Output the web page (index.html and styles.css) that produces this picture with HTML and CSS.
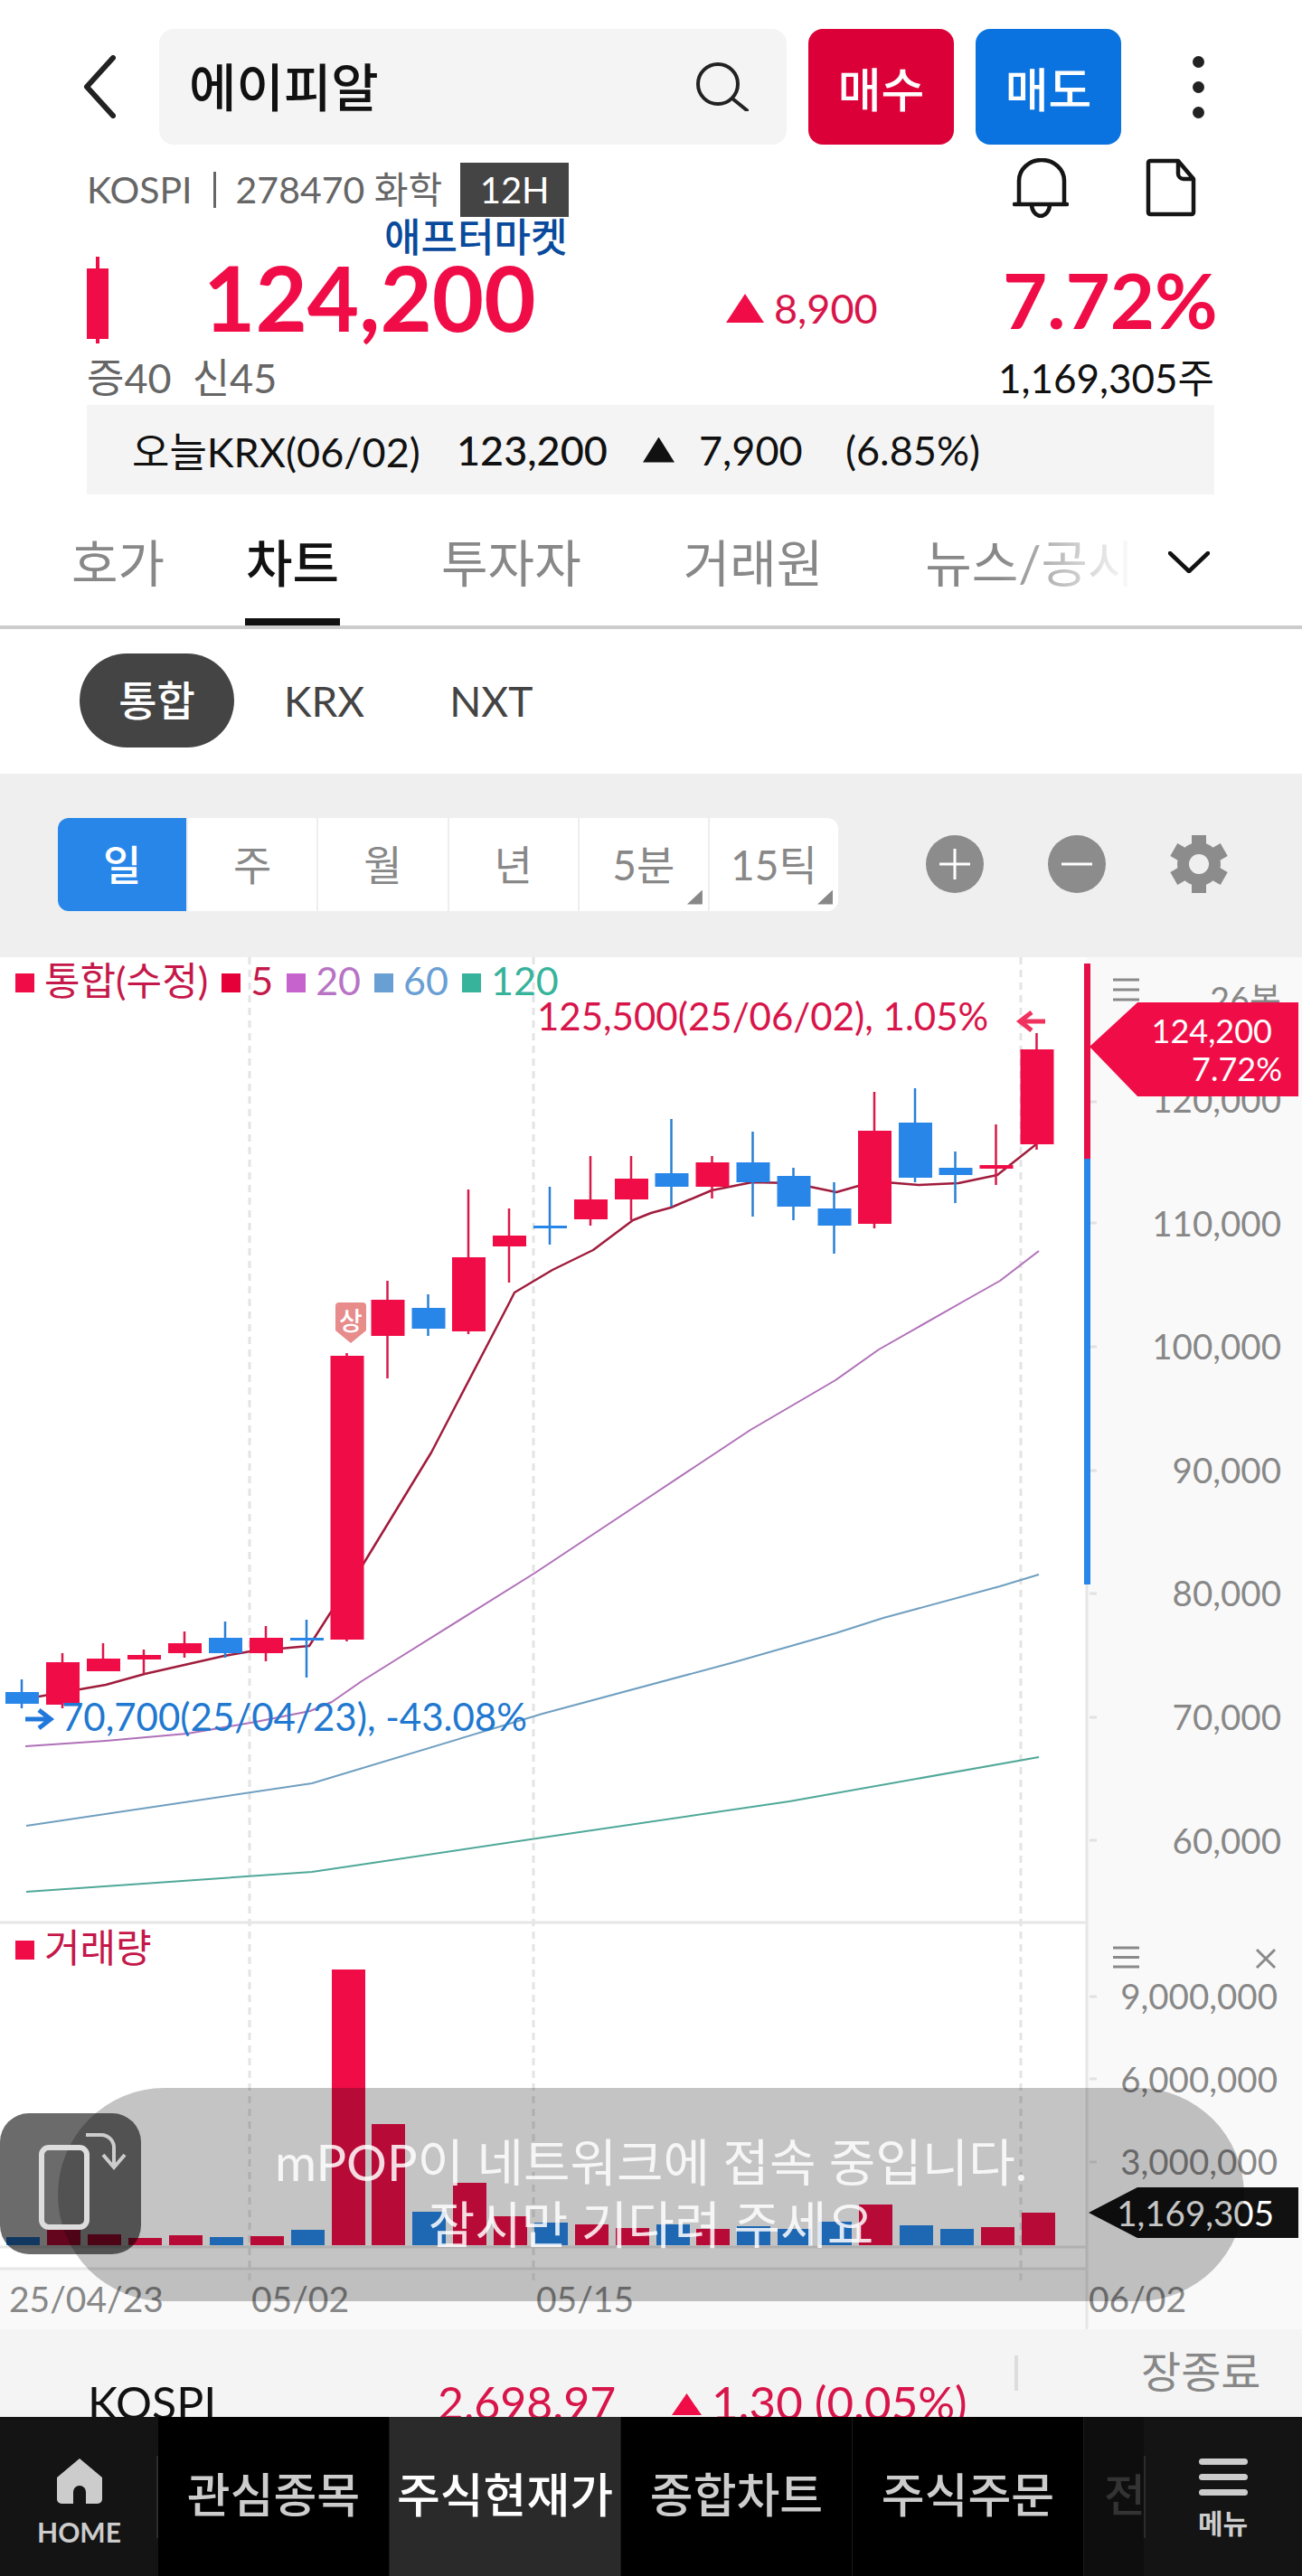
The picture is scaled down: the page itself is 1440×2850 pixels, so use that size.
FILE: index.html
```html
<!DOCTYPE html>
<html lang="ko">
<head>
    <meta charset="UTF-8">
    <title>에이피알 차트</title>
    <link rel="stylesheet" href="styles.css">
</head>
<body>
    <div class="page">
        <header class="top-bar">
            <svg class="back" viewBox="0 0 36 70"><path d="M33 3 L4 35 L33 67"/></svg>
            <div class="search">
                <span class="search-name">에이피알</span>
                <svg class="search-icon" viewBox="0 0 58 54"><circle cx="24" cy="24" r="22"/><path d="M40 40 L56 53"/></svg>
            </div>
            <button class="order buy">매수</button>
            <button class="order sell">매도</button>
            <div class="more"><i></i><i></i><i></i></div>
        </header>

        <section class="quote">
            <div class="market-row">
                <span class="market">KOSPI</span>
                <span class="pipe"></span>
                <span class="market">278470 화학</span>
                <span class="hours">12H</span>
                <svg class="bell" viewBox="0 0 62 66"><path d="M7 51 V25 a25 23 0 0 1 50 0 V51 M2 51 H60 M21 51 a10 13 0 0 0 20 0"/></svg>
                <svg class="doc" viewBox="0 0 56 65"><path d="M3 5 a2 2 0 0 1 2 -2 H36 L53 23 V60 a2 2 0 0 1 -2 2 H5 a2 2 0 0 1 -2 -2 Z M36 3 V17 a6 6 0 0 0 6 6 H53"/></svg>
            </div>
            <div class="session">애프터마켓</div>
            <div class="price-row">
                <svg class="mini-candle" viewBox="0 0 24 96"><rect x="10" width="4" height="96"/><rect y="13" width="24" height="78"/></svg>
                <span class="price">124,200</span>
                <span class="change"><i class="tri"></i>8,900</span>
                <span class="rate">7.72%</span>
            </div>
            <div class="margin-row">
                <span>증40&nbsp; 신45</span>
                <span class="volume-total">1,169,305주</span>
            </div>
            <div class="krx-row">
                <span class="krx-label">오늘KRX(06/02)</span>
                <span class="krx-price">123,200</span>
                <i class="tri-black"></i>
                <span class="krx-change">7,900</span>
                <span>(6.85%)</span>
            </div>
        </section>

        <nav class="tabs">
            <a class="tab tab-first">호가</a>
            <a class="tab active">차트</a>
            <a class="tab">투자자</a>
            <a class="tab">거래원</a>
            <a class="tab tab-fade">뉴스/공시</a>
            <svg class="tabs-more" viewBox="0 0 46 24"><path d="M2 2 L23 22 L44 2"/></svg>
        </nav>

        <div class="venues">
            <span class="venue on">통합</span>
            <span class="venue">KRX</span>
            <span class="venue">NXT</span>
        </div>

        <div class="toolbar">
            <div class="periods">
                <span class="period on">일</span>
                <span class="period">주</span>
                <span class="period">월</span>
                <span class="period">년</span>
                <span class="period has-menu">5분</span>
                <span class="period has-menu">15틱</span>
            </div>
            <div class="tools">
                <svg class="tool" viewBox="0 0 64 64"><circle cx="32" cy="32" r="32"/><path d="M15 32 H49 M32 15 V49"/></svg>
                <svg class="tool" viewBox="0 0 64 64"><circle cx="32" cy="32" r="32"/><path d="M15 32 H49"/></svg>
                <svg class="tool gear" viewBox="-32 -32 64 64">
                    <rect x="-8" y="-32" width="16" height="64"/>
                    <rect x="-8" y="-32" width="16" height="64" transform="rotate(60)"/>
                    <rect x="-8" y="-32" width="16" height="64" transform="rotate(120)"/>
                    <circle r="24"/>
                    <circle class="gear-hole" r="11"/>
                </svg>
            </div>
        </div>

        <div class="chart">
            <!-- viewBox keeps page coordinates, so y values read the same as the screen -->
            <svg class="plot" viewBox="0 1059 1440 1518">
                <rect class="axis-bg" x="1202" y="1059" width="238" height="1518"/>
                <rect class="axis-bg" x="0" y="2510" width="1202" height="67"/>
                <path class="dash" d="M276 1059V2525 M590 1059V2525 M1129 1059V2525"/>

                <path class="rule" d="M0 2127H1202 M0 2486H1202 M0 2510H1202 M1202 1753V2577"/>
                <path class="tick" d="M1205 1219h8 M1205 1353h8 M1205 1490h8 M1205 1627h8 M1205 1763h8 M1205 1900h8 M1205 2036h8 M1205 2209h8 M1205 2300h8 M1205 2392h8"/>

                <polyline class="ma ma120" points="29,2093 345,2071 600,2033 873,1993 1149,1944"/>
                <polyline class="ma ma60" points="29,2020 345,1973 600,1896 812,1839 924,1807 977,1790 1106,1755 1149,1742"/>
                <polyline class="ma ma20" points="28,1932 117,1926 207,1918 283,1905 343,1893 367,1883 400,1860 432,1840 592,1740 720,1655 830,1582 924,1527 972,1493 1067,1439 1106,1417 1149,1384"/>
                <polyline class="ma ma5" points="43,1877 117,1864 160,1852 248,1832 277,1827 342,1821 365,1785 402,1730 477,1607 564,1440 569,1430 611,1405 656,1383 700,1350 720,1342 742,1336 787,1317 832,1308 877,1309 925,1319 967,1307 1016,1311 1060,1309 1103,1300 1146,1266"/>

                <g class="up">
                    <path class="wick" d="M69 1829V1890 M114 1818V1849 M159 1825V1852 M204 1805V1834 M294 1799V1838 M383.5 1497V1816 M428.5 1417V1525 M518 1316V1476 M563 1337V1419 M653 1279V1356 M698 1279V1350 M787.5 1279V1326 M967 1208V1359 M1101.5 1244V1311 M1146.5 1143V1272"/>
                    <rect x="51" y="1839" width="37" height="47"/>
                    <rect x="96" y="1835" width="37" height="14"/>
                    <rect x="141" y="1831" width="37" height="5"/>
                    <rect x="186" y="1818" width="37" height="11"/>
                    <rect x="276" y="1812" width="37" height="17"/>
                    <rect x="365.5" y="1500" width="37" height="314"/>
                    <rect x="410.5" y="1438" width="37" height="40"/>
                    <rect x="500" y="1391" width="37" height="82"/>
                    <rect x="545" y="1367" width="37" height="12"/>
                    <rect x="635" y="1327" width="37" height="22"/>
                    <rect x="680" y="1304" width="37" height="23"/>
                    <rect x="769.5" y="1286" width="37" height="27"/>
                    <rect x="949" y="1251" width="37" height="103"/>
                    <rect x="1083.5" y="1289" width="37" height="4"/>
                    <rect x="1128.5" y="1161" width="37" height="105"/>
                </g>
                <g class="down">
                    <path class="wick" d="M24 1858V1890 M249 1794V1834 M339 1792V1856 M473.5 1432V1478 M608 1313V1377 M742.5 1238V1335 M832.5 1252V1346 M877.5 1292V1350 M922.5 1308V1387 M1012 1204V1308 M1056.5 1274V1331"/>
                    <rect x="6" y="1872" width="37" height="13"/>
                    <rect x="231" y="1812" width="37" height="17"/>
                    <rect x="321" y="1812" width="37" height="3"/>
                    <rect x="455.5" y="1447" width="37" height="23"/>
                    <rect x="590" y="1356" width="37" height="3"/>
                    <rect x="724.5" y="1298" width="37" height="15"/>
                    <rect x="814.5" y="1286" width="37" height="22"/>
                    <rect x="859.5" y="1301" width="37" height="34"/>
                    <rect x="904.5" y="1337" width="37" height="19"/>
                    <rect x="994" y="1242" width="37" height="61"/>
                    <rect x="1038.5" y="1292" width="37" height="8"/>
                </g>

                <!-- volume bars, baseline 2484 -->
                <g class="up">
                    <rect x="52" y="2466" width="37" height="18"/>
                    <rect x="97" y="2472" width="37" height="12"/>
                    <rect x="142" y="2476" width="37" height="8"/>
                    <rect x="187" y="2473" width="37" height="11"/>
                    <rect x="277" y="2474" width="37" height="10"/>
                    <rect x="367" y="2179" width="37" height="305"/>
                    <rect x="411" y="2350" width="37" height="134"/>
                    <rect x="501" y="2415" width="37" height="69"/>
                    <rect x="546" y="2452" width="37" height="32"/>
                    <rect x="636" y="2461" width="37" height="23"/>
                    <rect x="681" y="2465" width="37" height="19"/>
                    <rect x="770" y="2466" width="37" height="18"/>
                    <rect x="950" y="2439" width="37" height="45"/>
                    <rect x="1085" y="2464" width="37" height="20"/>
                    <rect x="1130" y="2448" width="37" height="36"/>
                </g>
                <g class="down">
                    <rect x="7" y="2475" width="37" height="9"/>
                    <rect x="232" y="2475" width="37" height="9"/>
                    <rect x="322" y="2467" width="37" height="17"/>
                    <rect x="456" y="2447" width="37" height="37"/>
                    <rect x="591" y="2459" width="37" height="25"/>
                    <rect x="726" y="2461" width="37" height="23"/>
                    <rect x="815" y="2463" width="37" height="21"/>
                    <rect x="860" y="2466" width="37" height="18"/>
                    <rect x="905" y="2458" width="37" height="26"/>
                    <rect x="995" y="2462" width="37" height="22"/>
                    <rect x="1040" y="2466" width="37" height="18"/>
                </g>

                <rect class="rail-up" x="1199" y="1066" width="7" height="216"/>
                <rect class="rail-down" x="1199" y="1282" width="7" height="471"/>

                <path class="hi-arrow" d="M1156 1130H1130 M1141 1120L1128 1130L1141 1140"/>
                <path class="lo-arrow" d="M28 1902H54 M43 1892L56 1902L43 1912"/>
                <path class="burger" d="M1231 1084H1260 M1231 1095H1260 M1231 1106H1260 M1231 2155H1260 M1231 2165.5H1260 M1231 2176H1260 M1390 2157L1410 2177 M1410 2157L1390 2177"/>
                <path class="upper-pin" d="M375 1441h26a4 4 0 0 1 4 4v27l-17 14l-17 -14v-27a4 4 0 0 1 4 -4z"/>
            </svg>

            <span class="upper-mark">상</span>

            <div class="legend">
                <span class="leg leg-main"><i></i>통합(수정)</span>
                <span class="leg leg-5"><i></i>5</span>
                <span class="leg leg-20"><i></i>20</span>
                <span class="leg leg-60"><i></i>60</span>
                <span class="leg leg-120"><i></i>120</span>
            </div>
            <div class="legend legend-vol">
                <span class="leg leg-main"><i></i>거래량</span>
            </div>

            <span class="note note-high">125,500(25/06/02), 1.05%</span>
            <span class="note note-low">70,700(25/04/23), -43.08%</span>

            <span class="count">26봉</span>
            <div class="price-axis">
                <span>120,000</span>
                <span>110,000</span>
                <span>100,000</span>
                <span>90,000</span>
                <span>80,000</span>
                <span>70,000</span>
                <span>60,000</span>
            </div>
            <div class="vol-axis">
                <span>9,000,000</span>
                <span>6,000,000</span>
                <span>3,000,000</span>
            </div>

            <div class="flag-price">
                <span class="flag-top">124,200</span>
                <span>7.72%</span>
            </div>
            <div class="flag-vol">1,169,305</div>

            <div class="dates">
                <span class="date-a">25/04/23</span>
                <span class="date-b">05/02</span>
                <span class="date-c">05/15</span>
                <span>06/02</span>
            </div>
        </div>

        <div class="index-strip">
            <span class="idx-name">KOSPI</span>
            <span class="idx-value">2,698.97</span>
            <i class="tri tri-idx"></i>
            <span class="idx-change">1.30 (0.05%)</span>
            <span class="idx-sep"></span>
            <span class="idx-state">장종료</span>
        </div>

        <footer class="bottom-nav">
            <div class="nav-side nav-home">
                <svg class="home-icon" viewBox="0 0 50 50"><path d="M25 0 L50 21 V45 a5 5 0 0 1 -5 5 H32 V37 a7 7 0 0 0 -14 0 V50 H5 a5 5 0 0 1 -5 -5 V21 Z"/></svg>
                <span>HOME</span>
            </div>
            <a class="nav-item">관심종목</a>
            <a class="nav-item current">주식현재가</a>
            <a class="nav-item">종합차트</a>
            <a class="nav-item">주식주문</a>
            <a class="nav-peek">전</a>
            <div class="nav-side nav-menu">
                <div class="menu-icon"><i></i><i></i><i></i></div>
                <span>메뉴</span>
            </div>
        </footer>

        <div class="toast">mPOP이 네트워크에 접속 중입니다.<br>잠시만 기다려 주세요</div>
        <div class="rotate-badge">
            <svg viewBox="0 0 156 156"><rect x="46" y="38" width="50" height="88" rx="8"/><path d="M95 24 H112 a14 14 0 0 1 14 14 V60 M114 46 L126 60 L138 46"/></svg>
        </div>
    </div>
</body>
</html>
```

FILE: styles.css
```css
* {
    margin: 0;
    padding: 0;
    box-sizing: border-box;
}

body {
    font-family: Lato, "Noto Sans CJK KR", sans-serif;
    background: #ffffff;
    color: #111111;
}

i {
    display: block;
}

.page {
    position: relative;
    width: 1440px;
    height: 2850px;
    overflow: hidden;
    display: flex;
    flex-direction: column;
}

/* top bar */
.top-bar {
    display: flex;
    align-items: center;
    height: 128px;
    margin-top: 32px;
    padding-left: 92px;
}

.back {
    width: 36px;
    height: 70px;
    margin-right: 48px;
}

.back path {
    fill: none;
    stroke: #222222;
    stroke-width: 6;
    stroke-linecap: round;
    stroke-linejoin: round;
}

.search {
    width: 694px;
    height: 128px;
    display: flex;
    align-items: center;
    justify-content: space-between;
    padding: 0 42px 0 33px;
    background: #f4f4f4;
    border-radius: 16px;
}

.search-name {
    font-size: 57px;
    font-weight: 500;
    line-height: 1;
    color: #111111;
}

.search-icon {
    width: 58px;
    height: 54px;
}

.search-icon circle,
.search-icon path {
    fill: none;
    stroke: #222222;
    stroke-width: 4;
    stroke-linecap: round;
}

.order {
    width: 161px;
    height: 128px;
    margin-left: 24px;
    border: none;
    border-radius: 16px;
    color: #ffffff;
    font-family: inherit;
    font-size: 52px;
    font-weight: 500;
}

.buy {
    background: #dc0038;
}

.sell {
    background: #0a73e0;
}

.more {
    display: flex;
    flex-direction: column;
    gap: 15px;
    margin-left: 79px;
}

.more i {
    width: 13px;
    height: 13px;
    background: #222222;
    border-radius: 50%;
}

/* quote block */
.quote {
    height: 387px;
    padding: 20px 97px 0 96px;
}

.market-row {
    display: flex;
    align-items: center;
    height: 60px;
    color: #666666;
}

.market {
    font-size: 41px;
    line-height: 60px;
}

.pipe {
    width: 3px;
    height: 40px;
    margin: 0 22px 0 23px;
    background: #666666;
}

.hours {
    width: 120px;
    height: 60px;
    margin-left: 20px;
    background: #444444;
    color: #ffffff;
    font-size: 40px;
    line-height: 60px;
    text-align: center;
}

.bell {
    width: 62px;
    height: 66px;
    margin-left: 491px;
    margin-top: -5px;
}

.doc {
    width: 56px;
    height: 65px;
    margin-left: 85px;
    margin-top: -5px;
}

.bell path,
.doc path {
    fill: none;
    stroke: #151515;
    stroke-width: 4.5;
    stroke-linejoin: round;
    stroke-linecap: round;
}

.session {
    height: 44px;
    margin-left: 329px;
    font-size: 44px;
    font-weight: 500;
    line-height: 44px;
    color: #0a4a9c;
}

.price-row {
    display: grid;
    grid-template-columns: 129px 578px 306px 234px;
    align-items: center;
    height: 96px;
}

.mini-candle {
    width: 24px;
    height: 96px;
    fill: #f00d47;
}

.price {
    margin-top: -6px;
    font-size: 99px;
    font-weight: 700;
    line-height: 96px;
    color: #f00d47;
}

.change {
    display: flex;
    align-items: center;
    gap: 11px;
    margin-top: 18px;
    font-size: 45px;
    color: #d8154a;
}

.tri {
    width: 42px;
    height: 32px;
    background: #f00d47;
    clip-path: polygon(50% 0, 100% 100%, 0 100%);
}

.rate {
    margin-top: -2px;
    font-size: 85px;
    font-weight: 700;
    line-height: 96px;
    text-align: right;
    color: #f00d47;
}

.margin-row {
    display: flex;
    justify-content: space-between;
    height: 48px;
    margin-top: 14px;
    font-size: 45px;
    line-height: 48px;
    color: #666666;
}

.volume-total {
    font-size: 44px;
    color: #111111;
}

.krx-row {
    display: flex;
    align-items: center;
    height: 99px;
    margin-top: 6px;
    padding-left: 50px;
    background: #f4f4f4;
    font-size: 45px;
    color: #111111;
}

.krx-label {
    width: 359px;
}

.krx-price {
    width: 206px;
    font-weight: 500;
}

.tri-black {
    width: 35px;
    height: 28px;
    margin-right: 27px;
    background: #111111;
    clip-path: polygon(50% 0, 100% 100%, 0 100%);
}

.krx-change {
    width: 162px;
}

/* tabs */
.tabs {
    display: flex;
    align-items: flex-start;
    height: 149px;
    padding: 40px 0 0 79px;
    border-bottom: 4px solid #cccccc;
}

.tab {
    position: relative;
    margin-right: 113px;
    font-size: 56px;
    line-height: 72px;
    color: #888888;
}

.tab-first {
    margin-right: 90px;
}

.tab.active {
    font-weight: 500;
    color: #111111;
}

.tab.active::after {
    content: "";
    position: absolute;
    left: -1px;
    right: -1px;
    bottom: -33px;
    height: 8px;
    background: #111111;
}

.tab-fade {
    margin-right: 0;
    -webkit-mask-image: linear-gradient(90deg, #000 35%, transparent 100%);
    mask-image: linear-gradient(90deg, #000 35%, transparent 100%);
}

.tabs-more {
    width: 46px;
    height: 24px;
    margin: 23px 0 0 37px;
}

.tabs-more path {
    fill: none;
    stroke: #111111;
    stroke-width: 4.5;
    stroke-linecap: round;
    stroke-linejoin: round;
}

.venues {
    display: flex;
    align-items: center;
    height: 160px;
    padding: 0 0 2px 88px;
}

.venue {
    margin-right: 94px;
    font-size: 46px;
    color: #444444;
}

.venue.on {
    width: 171px;
    height: 104px;
    margin-right: 55px;
    background: #444444;
    border-radius: 52px;
    color: #ffffff;
    font-weight: 500;
    line-height: 104px;
    text-align: center;
}

/* period toolbar */
.toolbar {
    display: flex;
    align-items: center;
    height: 203px;
    padding: 0 0 3px 64px;
    background: #efefef;
}

.periods {
    display: flex;
    width: 863px;
    height: 103px;
    background: #ffffff;
    border-radius: 12px;
    overflow: hidden;
}

.period {
    position: relative;
    flex: 1;
    font-size: 46px;
    line-height: 103px;
    text-align: center;
    color: #888888;
    border-left: 2px solid #eeeeee;
}

.period.on {
    background: #2886e8;
    border-left: none;
    color: #ffffff;
    font-weight: 500;
}

.has-menu::after {
    content: "";
    position: absolute;
    right: 6px;
    bottom: 7px;
    width: 17px;
    height: 16px;
    background: #888888;
    clip-path: polygon(100% 0, 100% 100%, 0 100%);
}

.tools {
    display: flex;
    gap: 71px;
    margin-left: 97px;
}

.tool {
    width: 64px;
    height: 64px;
    fill: #8c8c8c;
}

.tool path {
    fill: none;
    stroke: #ffffff;
    stroke-width: 3;
}

.gear-hole {
    fill: #efefef;
}

/* chart */
.chart {
    position: relative;
    height: 1518px;
    overflow: hidden;
    flex: none;
}

.plot {
    position: absolute;
    left: 0;
    top: 0;
    width: 1440px;
    height: 1518px;
}

.axis-bg {
    fill: #f9f9f9;
}

.dash {
    fill: none;
    stroke: #e4e4e4;
    stroke-width: 3;
    stroke-dasharray: 8 6;
}

.rule {
    fill: none;
    stroke: #e6e6e6;
    stroke-width: 3;
}

.tick {
    fill: none;
    stroke: #e2e2e2;
    stroke-width: 3;
}

.ma {
    fill: none;
    stroke-linejoin: round;
    stroke-width: 2;
}

.ma5 {
    stroke: #a01c3c;
    stroke-width: 2.5;
}

.ma20 {
    stroke: #b070b8;
}

.ma60 {
    stroke: #6f9fc0;
}

.ma120 {
    stroke: #4fa898;
}

.up rect {
    fill: #f00d47;
}

.down rect {
    fill: #2886e8;
}

.wick {
    fill: none;
    stroke-width: 2.5;
}

.up .wick {
    stroke: #d81a4a;
}

.down .wick {
    stroke: #2a80d4;
}

.rail-up {
    fill: #e60f47;
}

.rail-down {
    fill: #2886e8;
}

.hi-arrow {
    fill: none;
    stroke: #f0325f;
    stroke-width: 5;
}

.lo-arrow {
    fill: none;
    stroke: #2078dc;
    stroke-width: 5;
}

.burger {
    fill: none;
    stroke: #8a8a8a;
    stroke-width: 3;
}

.upper-pin {
    fill: #e78b8b;
}

.upper-mark {
    position: absolute;
    left: 371px;
    top: 385px;
    width: 34px;
    font-size: 28px;
    font-weight: 500;
    line-height: 34px;
    text-align: center;
    color: #ffffff;
}

.legend {
    position: absolute;
    left: 17px;
    top: 2px;
    display: flex;
    gap: 15px;
    height: 48px;
    font-size: 43px;
    line-height: 48px;
}

.legend-vol {
    top: 1072px;
}

.leg {
    display: flex;
    align-items: center;
    gap: 11px;
}

.leg i {
    width: 21px;
    height: 21px;
    margin-top: 4px;
}

.leg-main { color: #c5184a; }
.leg-main i { background: #f00d47; }
.leg-5 { color: #c5184a; }
.leg-5 i { background: #e6003a; }
.leg-20 { color: #b873c4; }
.leg-20 i { background: #c763cc; }
.leg-60 { color: #6a9fd4; }
.leg-60 i { background: #6a9fd4; }
.leg-120 { color: #37b39b; }
.leg-120 i { background: #37b39b; }

.note {
    position: absolute;
    font-size: 42px;
    line-height: 48px;
    white-space: nowrap;
}

.note-high {
    left: 594px;
    top: 41px;
    color: #d8154a;
}

.note-low {
    left: 68px;
    top: 816px;
    color: #2078d0;
}

.count {
    position: absolute;
    right: 23px;
    top: 22px;
    font-size: 38px;
    line-height: 48px;
    color: #888888;
}

.price-axis {
    position: absolute;
    right: 23px;
    top: 89px;
    display: flex;
    flex-direction: column;
    align-items: flex-end;
    font-size: 38.5px;
    line-height: 136.6px;
    color: #888888;
}

.vol-axis {
    position: absolute;
    right: 27px;
    top: 1104px;
    display: flex;
    flex-direction: column;
    align-items: flex-end;
    font-size: 38.5px;
    line-height: 91.5px;
    color: #888888;
}

.flag-price {
    position: absolute;
    left: 1205px;
    top: 50px;
    width: 231px;
    height: 104px;
    display: flex;
    flex-direction: column;
    align-items: flex-end;
    justify-content: center;
    padding-right: 18px;
    background: #f00d47;
    clip-path: polygon(0 47%, 23% 0, 100% 0, 100% 100%, 23% 100%);
    color: #ffffff;
    font-size: 36px;
    line-height: 42px;
}

.flag-top {
    margin-right: 11px;
}

.flag-vol {
    position: absolute;
    left: 1204px;
    top: 1361px;
    width: 232px;
    height: 56px;
    padding-right: 27px;
    background: #111111;
    clip-path: polygon(0 50%, 54px 0, 100% 0, 100% 100%, 54px 100%);
    color: #ffffff;
    font-size: 38.5px;
    line-height: 56px;
    text-align: right;
}

.dates {
    position: absolute;
    left: 10px;
    top: 1460px;
    display: flex;
    font-size: 39px;
    line-height: 48px;
    color: #888888;
}

.date-a { width: 268px; }
.date-b { width: 315px; }
.date-c { width: 611px; }

/* index strip, runs under the bottom nav */
.index-strip {
    flex: 1;
    min-height: 0;
    display: flex;
    align-items: flex-start;
    overflow: hidden;
    padding-left: 97px;
    background: #f4f4f4;
}

.idx-name,
.idx-value,
.idx-change {
    margin-top: 55px;
    font-size: 50px;
    line-height: 52px;
}

.idx-name {
    width: 387px;
}

.idx-value {
    width: 259px;
    color: #d8154a;
}

.idx-change {
    width: 335px;
    margin-left: 11px;
    font-size: 51px;
    color: #d8154a;
}

.tri-idx {
    width: 33px;
    height: 24px;
    margin-top: 71px;
}

.idx-sep {
    width: 4px;
    height: 39px;
    margin: 29px 0 0 0;
    background: #dddddd;
}

.idx-state {
    margin: 20px 0 0 136px;
    font-size: 48px;
    line-height: 54px;
    color: #888888;
}

/* bottom nav */
.bottom-nav {
    display: flex;
    flex: none;
    height: 176px;
    background: #000000;
    color: #cccccc;
}

.nav-side {
    position: relative;
    flex: none;
    width: 175px;
    display: flex;
    flex-direction: column;
    align-items: center;
    padding-top: 46px;
    background: #141414;
    font-size: 30px;
    font-weight: 700;
    line-height: 40px;
}

.nav-side::after {
    content: "";
    position: absolute;
    top: 43px;
    width: 2px;
    height: 91px;
    background: #2c2c2c;
}

.nav-home::after {
    right: 0;
}

.nav-menu::after {
    left: 0;
}

.home-icon {
    width: 50px;
    height: 50px;
    margin-bottom: 11px;
    fill: #cccccc;
}

.nav-item {
    width: 256px;
    flex: none;
    font-size: 52px;
    font-weight: 500;
    line-height: 172px;
    text-align: center;
    border-right: 1px solid #1a1a1a;
    white-space: nowrap;
}

.nav-item.current {
    background: #2a2a2a;
    color: #ffffff;
}

.nav-peek {
    flex: 1;
    overflow: hidden;
    padding-left: 22px;
    background: #0e0e0e;
    color: #333333;
    font-size: 50px;
    font-weight: 500;
    line-height: 172px;
}

.menu-icon {
    display: flex;
    flex-direction: column;
    gap: 10px;
    width: 54px;
    margin-bottom: 10px;
}

.menu-icon i {
    height: 7px;
    background: #cccccc;
    border-radius: 4px;
}

/* loading toast */
.toast {
    position: absolute;
    left: 64px;
    top: 2310px;
    width: 1312px;
    height: 236px;
    padding-top: 47px;
    background: rgba(0, 0, 0, 0.23);
    border-radius: 118px;
    color: rgba(255, 255, 255, 0.85);
    font-size: 56px;
    line-height: 69px;
    text-align: center;
}

.rotate-badge {
    position: absolute;
    left: 0;
    top: 2338px;
    width: 156px;
    height: 156px;
    background: rgba(0, 0, 0, 0.58);
    border-radius: 32px;
}

.rotate-badge svg {
    width: 156px;
    height: 156px;
}

.rotate-badge rect,
.rotate-badge path {
    fill: none;
    stroke: #dddddd;
    stroke-width: 6;
}

.rotate-badge path {
    stroke: #cccccc;
    stroke-width: 4;
}
```
